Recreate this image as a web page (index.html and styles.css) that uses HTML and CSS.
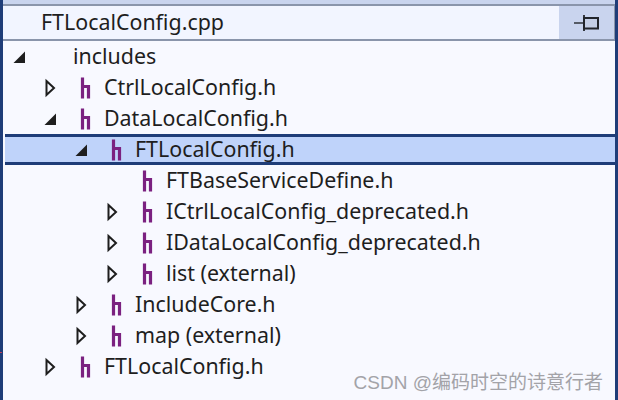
FILE: index.html
```html
<!DOCTYPE html>
<html lang="en">
<head>
    <meta charset="UTF-8">
    <title>FTLocalConfig.cpp</title>
    <link rel="stylesheet" href="styles.css">
</head>
<body>

<svg class="defs" width="0" height="0">
    <symbol id="file-h" viewBox="0 0 20 22">
        <path d="M9.500 0.500V21.500M9.500 9.500H15.500V21.500" fill="none" stroke="#7b2180" stroke-width="3.200"/>
    </symbol>
    <symbol id="open" viewBox="0 0 14 14">
        <path d="M13 1.500V13H1.500Z" fill="#1e1e1e"/>
    </symbol>
    <symbol id="closed" viewBox="0 0 14 20">
        <path d="M3.500 3L11 10L3.500 17Z" fill="none" stroke="#1e1e1e" stroke-width="2"/>
    </symbol>
</svg>

<div class="panel">
    <div class="header">
        <div class="title">FTLocalConfig.cpp</div>
        <div class="pin">
            <svg width="26" height="18" viewBox="0 0 26 18">
                <path d="M0 9H10" stroke="#555b66" stroke-width="2"/>
                <path d="M10 1V17" stroke="#33373f" stroke-width="2"/>
                <rect x="10" y="4" width="14" height="10.500" fill="#c5cfe6" stroke="#22252b" stroke-width="2"/>
            </svg>
        </div>
    </div>

    <div class="tree">
        <div class="row lvl0">
            <span class="arrow"><svg width="14" height="14"><use href="#open"/></svg></span>
            <span class="icon"></span>
            <span class="name">includes</span>
        </div>
        <div class="row lvl1">
            <span class="arrow"><svg width="14" height="20"><use href="#closed"/></svg></span>
            <span class="icon"><svg width="20" height="22"><use href="#file-h"/></svg></span>
            <span class="name">CtrlLocalConfig.h</span>
        </div>
        <div class="row lvl1">
            <span class="arrow"><svg width="14" height="14"><use href="#open"/></svg></span>
            <span class="icon"><svg width="20" height="22"><use href="#file-h"/></svg></span>
            <span class="name">DataLocalConfig.h</span>
        </div>
        <div class="row lvl2 selected">
            <span class="arrow"><svg width="14" height="14"><use href="#open"/></svg></span>
            <span class="icon"><svg width="20" height="22"><use href="#file-h"/></svg></span>
            <span class="name">FTLocalConfig.h</span>
        </div>
        <div class="row lvl3">
            <span class="arrow"></span>
            <span class="icon"><svg width="20" height="22"><use href="#file-h"/></svg></span>
            <span class="name">FTBaseServiceDefine.h</span>
        </div>
        <div class="row lvl3">
            <span class="arrow"><svg width="14" height="20"><use href="#closed"/></svg></span>
            <span class="icon"><svg width="20" height="22"><use href="#file-h"/></svg></span>
            <span class="name">ICtrlLocalConfig_deprecated.h</span>
        </div>
        <div class="row lvl3">
            <span class="arrow"><svg width="14" height="20"><use href="#closed"/></svg></span>
            <span class="icon"><svg width="20" height="22"><use href="#file-h"/></svg></span>
            <span class="name">IDataLocalConfig_deprecated.h</span>
        </div>
        <div class="row lvl3">
            <span class="arrow"><svg width="14" height="20"><use href="#closed"/></svg></span>
            <span class="icon"><svg width="20" height="22"><use href="#file-h"/></svg></span>
            <span class="name">list (external)</span>
        </div>
        <div class="row lvl2">
            <span class="arrow"><svg width="14" height="20"><use href="#closed"/></svg></span>
            <span class="icon"><svg width="20" height="22"><use href="#file-h"/></svg></span>
            <span class="name">IncludeCore.h</span>
        </div>
        <div class="row lvl2">
            <span class="arrow"><svg width="14" height="20"><use href="#closed"/></svg></span>
            <span class="icon"><svg width="20" height="22"><use href="#file-h"/></svg></span>
            <span class="name">map (external)</span>
        </div>
        <div class="row lvl1">
            <span class="arrow"><svg width="14" height="20"><use href="#closed"/></svg></span>
            <span class="icon"><svg width="20" height="22"><use href="#file-h"/></svg></span>
            <span class="name">FTLocalConfig.h</span>
        </div>
    </div>

    <div class="watermark">CSDN @编码时空的诗意行者</div>
</div>
<div class="edge-mark"></div>

</body>
</html>
```

FILE: styles.css
```css
* {
    margin: 0;
    padding: 0;
    box-sizing: border-box;
}
body {
    width: 618px;
    height: 400px;
    overflow: hidden;
    background: #f8f9ff;
    font-family: 'Noto Sans', 'Open Sans', sans-serif;
    color: #1e1e1e;
}
.defs {
    position: absolute;
}
.panel {
    position: relative;
    height: 400px;
    padding-top: 4px;
    background: #f8f9ff;
    border-left: 3px solid #1f3d78;
    border-right: 3px solid #1f3d78;
    box-shadow: inset 0 4px 0 #c9d4ee;
}
.header {
    display: flex;
    justify-content: space-between;
    height: 37px;
    background: #f2f5ff;
    border-top: 2px solid #8a95ab;
    border-bottom: 2px solid #8a95ab;
    border-right: 1px solid #8a95ab;
}
.title {
    padding-left: 38px;
    font-size: 21.4px;
    line-height: 31px;
}
.pin {
    width: 55px;
    background: #c9d4ee;
    display: flex;
    align-items: center;
    justify-content: center;
}
.tree {
    display: flex;
    flex-direction: column;
}
.row {
    display: flex;
    align-items: center;
    height: 31px;
    font-size: 21.4px;
    white-space: nowrap;
}
.lvl0 { padding-left: 9px; }
.lvl1 { padding-left: 40px; }
.lvl2 { padding-left: 71px; }
.lvl3 { padding-left: 102px; }
.selected {
    margin-left: 2px;
    padding-left: 69px;
    background: #bfd3fa;
    border-top: 3px solid #1f3d78;
    border-bottom: 3px solid #1f3d78;
}
.arrow {
    display: flex;
    align-items: center;
    width: 30px;
    height: 20px;
}
.icon {
    display: flex;
    align-items: center;
    width: 31px;
    height: 22px;
}
.name {
    line-height: 25px;
    padding-bottom: 2px;
}
.watermark {
    position: absolute;
    right: 12px;
    bottom: 6px;
    font-family: 'Liberation Sans', 'Noto Sans CJK SC', sans-serif;
    font-size: 19px;
    color: #a3a3a8;
}
.edge-mark {
    position: absolute;
    left: 0;
    top: 352px;
    width: 2px;
    height: 1px;
    background: #c0405a;
}
```
